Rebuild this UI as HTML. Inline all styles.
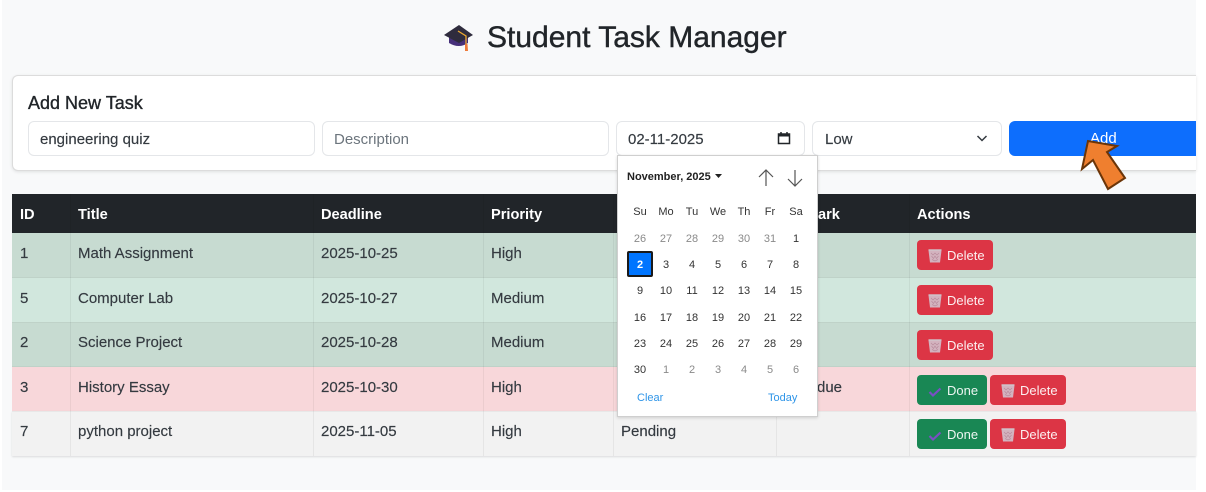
<!DOCTYPE html>
<html><head><meta charset="utf-8">
<style>
html,body{margin:0;padding:0;width:1206px;height:492px;overflow:hidden;background:#fff}
body{position:relative;font-family:"Liberation Sans",sans-serif;color:#212529}
#pg{position:absolute;left:2px;top:0;width:1194px;height:490px;background:#f8f9fa}
.a{position:absolute;white-space:nowrap}
.card{left:12px;top:75px;width:1184px;height:96px;background:#fff;border:1px solid #dcdcdc;border-right:none;border-radius:6px 0 0 6px;box-shadow:0 1px 3px rgba(0,0,0,.1);box-sizing:border-box}
.inp{background:#fff;border:1px solid #e4e6e9;border-radius:6px;box-sizing:border-box;top:121px;height:35px}
.t{font-size:15px;line-height:20px;color:#343a40;margin-top:1px;-webkit-text-stroke:.15px #343a40}
.r{left:12px;width:1184px}
.th{font-size:14.6px;font-weight:bold;color:#fff;line-height:20px;top:205px}
.v{top:194px;width:1px;height:262px;background:rgba(0,0,0,.05)}
.btn{height:30px;border-radius:4px;color:#fff;font-size:13px;line-height:30px;box-sizing:border-box}
.btn span{top:1px;opacity:.92}
.del{background:#dc3545;width:76px}
.done{background:#198754;width:70px}
.cal{left:617px;top:155px;width:201px;height:262px;background:#fff;border:1px solid #cfcfcf;box-sizing:border-box;box-shadow:0 1px 3px rgba(0,0,0,.15)}
.d{width:26px;text-align:center;font-size:11px;line-height:14px;color:#333;margin-top:1px}
.g{color:#8a8a8a}
.h{font-size:11px;line-height:14px;width:26px;text-align:center;color:#333;top:205px}
</style></head>
<body>
<div id="pg"></div>

<svg width="0" height="0" style="position:absolute"><defs>
<g id="tr"><path d="M.5 1.500H13.500L12 13.500H2Z" fill="#d3b3bf"/><path d="M.5 1H13.500" stroke="#cfc6cc" stroke-width="1.400"/><path d="M3 4L5 6L7 4L9 6L11 4M3.500 7L5.500 9.500L7 7L8.500 9.500L10.500 7M4 10.500L7 12L10 10.500" fill="none" stroke="#b98b9c" stroke-width=".7"/></g>
<path id="ck" d="M1.500 8L5 11.500L12.500 4.500" fill="none" stroke="#7a4fc4" stroke-width="2.200"/>
</defs></svg>

<svg class="a" style="left:444px;top:25px" width="30" height="27" viewBox="0 0 30 27">
<path d="M5 11V18Q15 24 24 18V11Z" fill="#46307a"/>
<path d="M15 0L29 10L15 18L0 10Z" fill="#2f2c3d"/>
<path d="M14 6L22 11V20" fill="none" stroke="#eda92f" stroke-width="1.300"/>
<path d="M21 19H23.500L24 26H21Z" fill="#ee7b3a"/>
</svg>
<div class="a" style="left:487px;top:19px;font-size:30px;line-height:38px;color:#212529;-webkit-text-stroke:.4px #212529">Student Task Manager</div>

<div class="a card"></div>
<div class="a" style="left:28px;top:92px;font-size:18px;line-height:22px;color:#212529;-webkit-text-stroke:.35px #212529">Add New Task</div>
<div class="a inp" style="left:28px;width:287px"></div>
<div class="a t" style="left:40px;top:129px">engineering quiz</div>
<div class="a inp" style="left:322px;width:287px"></div>
<div class="a t" style="left:334px;top:129px;color:#6c757d;-webkit-text-stroke:0">Description</div>
<div class="a inp" style="left:616px;width:189px"></div>
<div class="a t" style="left:628px;top:129px">02-11-2025</div>
<svg class="a" style="left:777px;top:131px" width="14" height="14" viewBox="0 0 14 14"><path d="M1.500 3H12.500V12.500H1.500Z" fill="none" stroke="#212529" stroke-width="1.500"/><path d="M1.500 3H12.500V5.500H1.500Z" fill="#212529"/><path d="M4 1V3M10 1V3" stroke="#212529" stroke-width="1.500"/></svg>
<div class="a inp" style="left:812px;width:190px"></div>
<div class="a t" style="left:825px;top:129px">Low</div>
<svg class="a" style="left:976px;top:134px" width="12" height="9" viewBox="0 0 12 9"><path d="M1.500 2L6 6.500L10.500 2" fill="none" stroke="#343a40" stroke-width="1.500"/></svg>
<div class="a" style="left:1009px;top:121px;width:187px;height:35px;background:#0d6efd;border-radius:6px 0 0 6px"></div>
<div class="a t" style="left:1090px;top:128px;color:#fff;-webkit-text-stroke:0">Add</div>

<div class="a r" style="top:194px;height:39px;background:#212529"></div>
<div class="a r" style="top:233px;height:45px;background:#c7dbd1"></div>
<div class="a r" style="top:278px;height:44px;background:#d1e7dd"></div>
<div class="a r" style="top:322px;height:45px;background:#c7dbd1"></div>
<div class="a r" style="top:367px;height:44px;background:#f8d7da"></div>
<div class="a r" style="top:411px;height:45px;background:#f2f2f2;box-shadow:0 1px 2px rgba(0,0,0,.12)"></div>
<div class="a v" style="left:70px"></div><div class="a v" style="left:313px"></div><div class="a v" style="left:483px"></div><div class="a v" style="left:613px"></div><div class="a v" style="left:776px"></div><div class="a v" style="left:909px"></div>
<div class="a r" style="top:277px;height:1px;background:rgba(0,0,0,.04)"></div>
<div class="a r" style="top:322px;height:1px;background:rgba(0,0,0,.04)"></div>
<div class="a r" style="top:366px;height:1px;background:rgba(0,0,0,.04)"></div>
<div class="a r" style="top:411px;height:1px;background:rgba(0,0,0,.04)"></div>

<div class="a th" style="left:20px">ID</div><div class="a th" style="left:78px">Title</div><div class="a th" style="left:321px">Deadline</div><div class="a th" style="left:491px">Priority</div><div class="a th" style="left:818px">ark</div><div class="a th" style="left:917px">Actions</div>

<div class="a t" style="left:20px;top:243px">1</div><div class="a t" style="left:78px;top:243px">Math Assignment</div><div class="a t" style="left:321px;top:243px">2025-10-25</div><div class="a t" style="left:491px;top:243px">High</div>
<div class="a t" style="left:20px;top:288px">5</div><div class="a t" style="left:78px;top:288px">Computer Lab</div><div class="a t" style="left:321px;top:288px">2025-10-27</div><div class="a t" style="left:491px;top:288px">Medium</div>
<div class="a t" style="left:20px;top:332px">2</div><div class="a t" style="left:78px;top:332px">Science Project</div><div class="a t" style="left:321px;top:332px">2025-10-28</div><div class="a t" style="left:491px;top:332px">Medium</div>
<div class="a t" style="left:20px;top:377px">3</div><div class="a t" style="left:78px;top:377px">History Essay</div><div class="a t" style="left:321px;top:377px">2025-10-30</div><div class="a t" style="left:491px;top:377px">High</div><div class="a t" style="left:817px;top:377px">due</div>
<div class="a t" style="left:20px;top:421px">7</div><div class="a t" style="left:78px;top:421px">python project</div><div class="a t" style="left:321px;top:421px">2025-11-05</div><div class="a t" style="left:491px;top:421px">High</div><div class="a t" style="left:621px;top:421px">Pending</div>

<!-- buttons -->
<div class="a btn del" style="left:917px;top:240px"><span class="a" style="left:30px">Delete</span><svg class="a" style="left:11px;top:9px" width="14" height="14" viewBox="0 0 14 14"><use href="#tr"/></svg></div>
<div class="a btn del" style="left:917px;top:285px"><span class="a" style="left:30px">Delete</span><svg class="a" style="left:11px;top:9px" width="14" height="14" viewBox="0 0 14 14"><use href="#tr"/></svg></div>
<div class="a btn del" style="left:917px;top:330px"><span class="a" style="left:30px">Delete</span><svg class="a" style="left:11px;top:9px" width="14" height="14" viewBox="0 0 14 14"><use href="#tr"/></svg></div>
<div class="a btn done" style="left:917px;top:375px"><span class="a" style="left:30px">Done</span><svg class="a" style="left:11px;top:9px" width="14" height="14" viewBox="0 0 14 14"><use href="#ck"/></svg></div>
<div class="a btn del" style="left:990px;top:375px"><span class="a" style="left:30px">Delete</span><svg class="a" style="left:11px;top:9px" width="14" height="14" viewBox="0 0 14 14"><use href="#tr"/></svg></div>
<div class="a btn done" style="left:917px;top:419px"><span class="a" style="left:30px">Done</span><svg class="a" style="left:11px;top:9px" width="14" height="14" viewBox="0 0 14 14"><use href="#ck"/></svg></div>
<div class="a btn del" style="left:990px;top:419px"><span class="a" style="left:30px">Delete</span><svg class="a" style="left:11px;top:9px" width="14" height="14" viewBox="0 0 14 14"><use href="#tr"/></svg></div>

<!-- calendar -->
<div class="a cal"></div>
<div class="a" style="left:627px;top:170px;font-size:11px;font-weight:bold;line-height:14px;color:#222">November, 2025</div>
<svg class="a" style="left:715px;top:174px" width="8" height="5"><path d="M0 0H7L3.500 4Z" fill="#222"/></svg>
<svg class="a" style="left:756px;top:168px" width="20" height="20" viewBox="0 0 20 20"><path d="M10 18V2M3 9L10 2L17 9" fill="none" stroke="#555" stroke-width="1.200"/></svg>
<svg class="a" style="left:785px;top:168px" width="20" height="20" viewBox="0 0 20 20"><path d="M10 2V18M3 11L10 18L17 11" fill="none" stroke="#555" stroke-width="1.200"/></svg>

<div class="a h" style="left:627px">Su</div><div class="a h" style="left:653px">Mo</div><div class="a h" style="left:679px">Tu</div><div class="a h" style="left:705px">We</div><div class="a h" style="left:731px">Th</div><div class="a h" style="left:757px">Fr</div><div class="a h" style="left:783px">Sa</div>

<div class="a d g" style="left:627px;top:231px">26</div><div class="a d g" style="left:653px;top:231px">27</div><div class="a d g" style="left:679px;top:231px">28</div><div class="a d g" style="left:705px;top:231px">29</div><div class="a d g" style="left:731px;top:231px">30</div><div class="a d g" style="left:757px;top:231px">31</div><div class="a d" style="left:783px;top:231px">1</div>

<div class="a" style="left:627px;top:251px;width:26px;height:26px;background:#0075ff;border:2px solid #1a1a1a;border-radius:2px;box-sizing:border-box"></div>
<div class="a d" style="left:627px;top:257px;color:#fff;font-weight:bold">2</div><div class="a d" style="left:653px;top:257px">3</div><div class="a d" style="left:679px;top:257px">4</div><div class="a d" style="left:705px;top:257px">5</div><div class="a d" style="left:731px;top:257px">6</div><div class="a d" style="left:757px;top:257px">7</div><div class="a d" style="left:783px;top:257px">8</div>

<div class="a d" style="left:627px;top:283px">9</div><div class="a d" style="left:653px;top:283px">10</div><div class="a d" style="left:679px;top:283px">11</div><div class="a d" style="left:705px;top:283px">12</div><div class="a d" style="left:731px;top:283px">13</div><div class="a d" style="left:757px;top:283px">14</div><div class="a d" style="left:783px;top:283px">15</div>

<div class="a d" style="left:627px;top:310px">16</div><div class="a d" style="left:653px;top:310px">17</div><div class="a d" style="left:679px;top:310px">18</div><div class="a d" style="left:705px;top:310px">19</div><div class="a d" style="left:731px;top:310px">20</div><div class="a d" style="left:757px;top:310px">21</div><div class="a d" style="left:783px;top:310px">22</div>

<div class="a d" style="left:627px;top:336px">23</div><div class="a d" style="left:653px;top:336px">24</div><div class="a d" style="left:679px;top:336px">25</div><div class="a d" style="left:705px;top:336px">26</div><div class="a d" style="left:731px;top:336px">27</div><div class="a d" style="left:757px;top:336px">28</div><div class="a d" style="left:783px;top:336px">29</div>

<div class="a d" style="left:627px;top:362px">30</div><div class="a d g" style="left:653px;top:362px">1</div><div class="a d g" style="left:679px;top:362px">2</div><div class="a d g" style="left:705px;top:362px">3</div><div class="a d g" style="left:731px;top:362px">4</div><div class="a d g" style="left:757px;top:362px">5</div><div class="a d g" style="left:783px;top:362px">6</div>

<div class="a" style="left:637px;top:391px;font-size:11px;line-height:14px;color:#2f95e8">Clear</div>
<div class="a" style="left:768px;top:391px;font-size:11px;line-height:14px;color:#2f95e8">Today</div>

<!-- arrow -->
<svg class="a" style="left:0;top:0" width="1206" height="492"><path d="M1088 141L1082 169L1093 160L1108 189L1125 178L1107 152L1117 146Z" fill="#ef7f2f" stroke="#6b3508" stroke-width="2" stroke-linejoin="miter"/></svg>
</body></html>
